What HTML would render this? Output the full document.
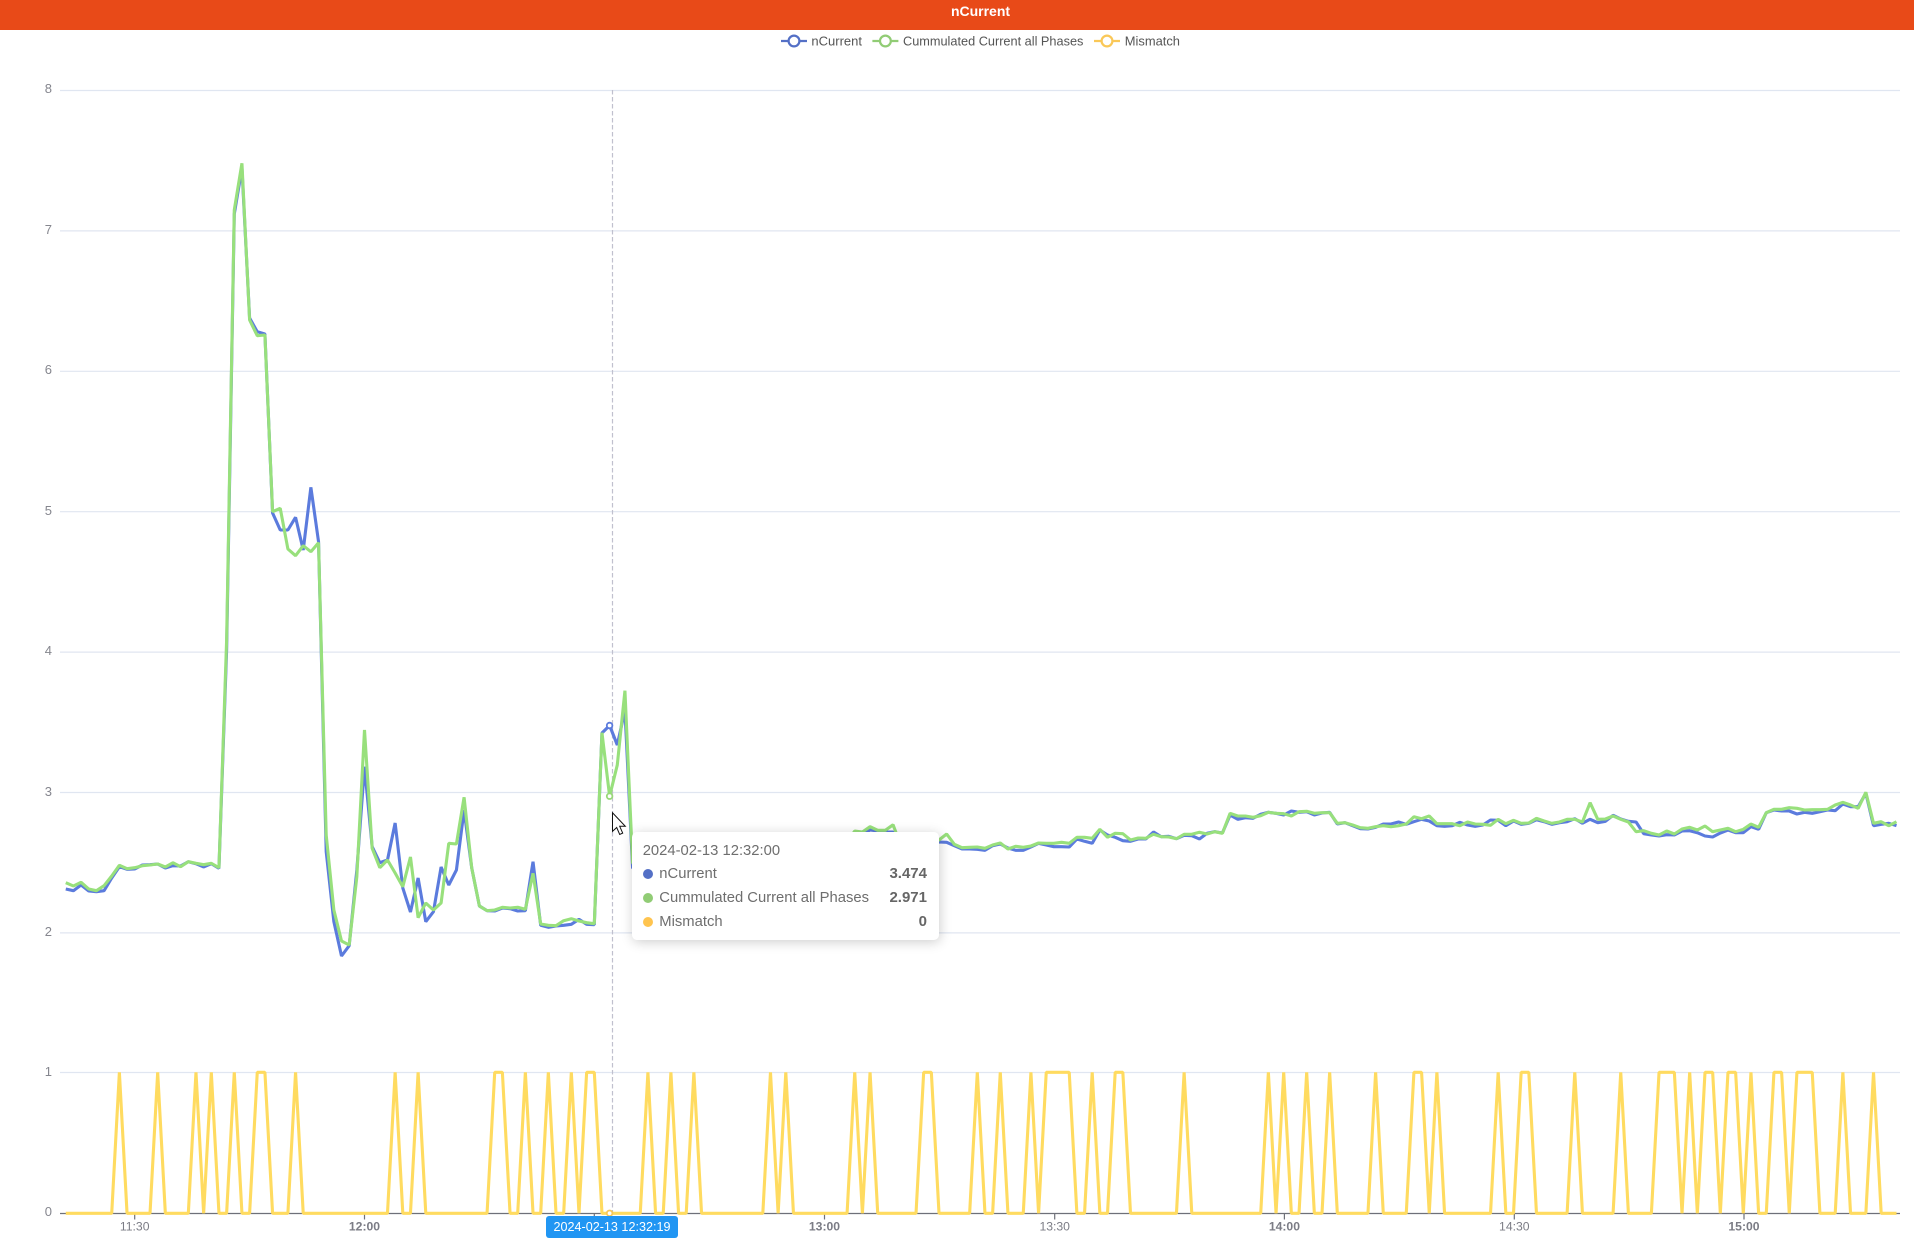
<!DOCTYPE html>
<html lang="en">
<head>
<meta charset="utf-8">
<title>nCurrent</title>
<style>
html,body{margin:0;padding:0;background:#fff;}
body{width:1914px;height:1242px;position:relative;overflow:hidden;font-family:"Liberation Sans",sans-serif;}
#bar{position:absolute;left:0;top:0;width:1914px;height:30px;background:#e84a18;color:#fff;font-weight:bold;font-size:14px;line-height:23px;text-align:center;padding-left:47px;box-sizing:border-box;}
svg{position:absolute;left:0;top:0;}
#tip{position:absolute;left:632px;top:832px;width:307px;height:108px;background:#fff;border-radius:5px;box-shadow:1px 2px 12px rgba(0,0,0,.2);color:#6e6e6e;font-size:14.8px;}
#tip div{position:absolute;white-space:nowrap;line-height:20px;}
#tip .dot{width:10px;height:10px;border-radius:50%;left:11px;}
#tip .v{right:12px;font-weight:bold;font-size:15px;color:#666;}
#plabel{position:absolute;left:546px;top:1216px;width:132px;height:22px;background:#2196f3;border-radius:3px;color:#fff;font-size:12.6px;line-height:22px;text-align:center;}
</style>
</head>
<body>
<svg width="1914" height="1242" viewBox="0 0 1914 1242">
<g stroke="#e0e6f1" stroke-width="1.2">
<path d="M60 90.5H1900M60 230.9H1900M60 371.3H1900M60 511.7H1900M60 652.1H1900M60 792.5H1900M60 932.9H1900M60 1072.5H1900"/>
</g>
<path d="M60 1213.5H1900" stroke="#6e7079" stroke-width="1.2"/>
<path d="M134.7 1213.5v6M364.5 1213.5v6M594.3 1213.5v6M824.5 1213.5v6M1054.7 1213.5v6M1284.4 1213.5v6M1514.3 1213.5v6M1744 1213.5v6" stroke="#6e7079" stroke-width="1.2"/>
<g font-family="Liberation Sans, sans-serif" font-size="13" fill="#85868e" text-anchor="end">
<text x="52" y="93">8</text><text x="52" y="234">7</text><text x="52" y="374">6</text><text x="52" y="515">5</text><text x="52" y="655">4</text><text x="52" y="796">3</text><text x="52" y="936">2</text><text x="52" y="1076">1</text><text x="52" y="1216">0</text>
</g>
<g font-family="Liberation Sans, sans-serif" font-size="12.2" fill="#7b7c85" text-anchor="middle">
<text x="134.7" y="1230.5">11:30</text>
<text x="364.5" y="1230.5" font-weight="bold">12:00</text>
<text x="824.5" y="1230.5" font-weight="bold">13:00</text>
<text x="1054.7" y="1230.5">13:30</text>
<text x="1284.4" y="1230.5" font-weight="bold">14:00</text>
<text x="1514.3" y="1230.5">14:30</text>
<text x="1744" y="1230.5" font-weight="bold">15:00</text>
</g>
<path d="M612.5 90V1213" stroke="#c0c0ce" stroke-width="1.2" stroke-dasharray="4.5 2.5" fill="none"/>
<g transform="translate(134.7 0) scale(7.66 1)" fill="none" stroke-width="3.1" stroke-linejoin="bevel">
<polyline vector-effect="non-scaling-stroke" stroke="#5b7bdd" points="-9,889 -8,890.7 -7,885 -6,891 -5,891.7 -4,890.7 -3,878 -2,866.7 -1,869.3 0,869 1,865 2,864.7 3,864 4,868 5,865.7 6,866 7,861.7 8,863.7 9,867 10,863.7 11,868.3 12,650 13,214 14,168 15,318 16,331.7 17,334 18,513 19,530 20,530 21,517.3 22,550 23,487.3 24,541.7 25,851.7 26,921.7 27,956 28,945.7 29,870 30,766.7 31,846.7 32,862.7 33,860 34,823 35,888 36,912 37,878 38,921.7 39,911.7 40,867 41,885 42,870 43,810 44,868 45,906 46,910.7 47,911 48,908 49,908.7 50,911 51,910.7 52,861.7 53,925.3 54,927.3 55,926 56,925.3 57,924.3 58,919.3 59,924.3 60,924.7 61,733 62,725.5 63,745 64,710 65,868 66,870 70,868 75,866 80,860 85,855 90,850 93,845 94,833 95,834 96,830 97,831 98,832 99,832 100,845 101,845 104,843 105,842 106,842.3 107,845.7 108,849 109,849 110,849.3 111,850.3 112,845.7 113,844 114,848 115,850.3 116,850.3 117,847 118,843.3 119,845 120,846.7 121,846.7 122,847 123,839 124,841.3 125,843.3 126,830 127,835 128,837.3 129,840.7 130,841.3 131,839 132,839 133,832 134,836.7 135,836.3 136,838.7 137,835.3 138,835.7 139,839 140,833.3 141,831.7 142,833 143,815 144,819.3 145,817.7 146,818.3 147,814.3 148,812.3 149,813.3 150,815 151,811 152,812.3 153,811.7 154,815 155,813 156,812.3 157,824 158,822.7 159,825.7 160,828.7 161,829 162,827.3 163,824 164,824 165,822 166,824.3 167,821.7 168,819.3 169,821 170,825.7 171,826.3 172,825.7 173,822.3 174,825 175,826.3 176,825 177,820 178,820.3 179,825.7 180,821 181,824.3 182,823.3 183,819.7 184,821.7 185,824.3 186,822.7 187,821.7 188,818.7 189,823.3 190,819.3 191,822.7 192,821.3 193,815.3 194,819 195,821.3 196,822 197,833.7 198,835 199,836 200,834.7 201,835 202,831 203,830.7 204,832.7 205,836 206,837 207,833 208,830 209,832.7 210,832.7 211,826.7 212,829.3 213,812.7 214,810 215,811 216,811 217,814 218,812.3 219,813.3 220,811.7 221,810 222,810.7 223,804 224,806.7 225,806.7 226,793.3 227,825.7 228,824.3 229,823.3 230,825.7"/>
<polyline vector-effect="non-scaling-stroke" stroke="#98e07c" points="-9,882.7 -8,886 -7,882.3 -6,889 -5,890.7 -4,885.7 -3,876 -2,865.3 -1,868.7 0,867.7 1,865.7 2,865 3,864 4,867 5,862.7 6,866.7 7,861.7 8,863.3 9,864.7 10,863.3 11,867.7 12,640 13,210 14,163.3 15,320 16,335.7 17,335 18,511.7 19,508.3 20,549 21,555.7 22,545.7 23,551.7 24,542.7 25,835 26,910 27,941 28,945 29,876.7 30,730 31,848.3 32,867.7 33,860 34,873 35,886.7 36,857 37,917.7 38,903 39,910 40,903 41,843.3 42,844 43,797.3 44,868 45,906 46,910.7 47,910 48,907.3 49,908 50,907.3 51,909.3 52,873.3 53,924 54,925.3 55,925.7 56,920.7 57,918.7 58,921 59,922.7 60,923.7 61,732.7 62,796.2 63,765 64,690.7 65,863 66,868 70,866 75,864 80,860 85,855 90,850 93,842 94,831 95,832 96,826.7 97,830.3 98,830.3 99,824.7 100,845 101,846 104,842 105,840 106,834 107,844.3 108,847.7 109,847.3 110,847 111,848.3 112,845 113,843 114,849 115,846.3 116,847.3 117,846 118,843 119,843.3 120,843.3 121,842.3 122,843.3 123,837.3 124,837.3 125,838.3 126,829.3 127,837.3 128,833.3 129,833.7 130,840 131,838 132,838.3 133,834.3 134,836.7 135,837 136,838.7 137,834.3 138,834.3 139,832.3 140,834 141,831.7 142,833.3 143,813.3 144,816 145,816 146,817.3 147,815.7 148,812.3 149,813.3 150,813.7 151,816 152,811.7 153,811.3 154,813.3 155,812.7 156,812.7 157,823.3 158,822.7 159,825 160,827.7 161,828.3 162,826.7 163,825.7 164,826.7 165,825.7 166,824 167,816.7 168,818.7 169,816 170,823.7 171,823.7 172,823.7 173,825.7 174,822 175,824 176,824.3 177,825.3 178,819.3 179,823.7 180,820.3 181,823.3 182,823 183,818.3 184,821 185,823.3 186,822 187,819.3 188,819.3 189,822 190,802.7 191,819.3 192,819 193,816 194,819.3 195,822 196,831.7 197,830.7 198,833.3 199,835 200,831 201,834 202,829 203,827.3 204,830 205,826 206,831.7 207,830 208,828.3 209,831.7 210,829.3 211,824 212,827.3 213,812.7 214,809.3 215,809.3 216,807.7 217,808.3 218,810 219,809.7 220,809.7 221,809.3 222,805 223,802.3 224,805 225,808.3 226,792.3 227,823.3 228,821.7 229,825.7 230,821.7"/>
<polyline vector-effect="non-scaling-stroke" stroke="#ffdb60" points="-9,1213.3 -3,1213.3 -2,1072.3 -1,1213.3 2,1213.3 3,1072.3 4,1213.3 7,1213.3 8,1072.3 9,1213.3 10,1072.3 11,1213.3 12,1213.3 13,1072.3 14,1213.3 15,1213.3 16,1072.3 17,1072.3 18,1213.3 20,1213.3 21,1072.3 22,1213.3 33,1213.3 34,1072.3 35,1213.3 36,1213.3 37,1072.3 38,1213.3 46,1213.3 47,1072.3 48,1072.3 49,1213.3 50,1213.3 51,1072.3 52,1213.3 53,1213.3 54,1072.3 55,1213.3 56,1213.3 57,1072.3 58,1213.3 59,1072.3 60,1072.3 61,1213.3 66,1213.3 67,1072.3 68,1213.3 69,1213.3 70,1072.3 71,1213.3 72,1213.3 73,1072.3 74,1213.3 82,1213.3 83,1072.3 84,1213.3 85,1072.3 86,1213.3 93,1213.3 94,1072.3 95,1213.3 96,1072.3 97,1213.3 102,1213.3 103,1072.3 104,1072.3 105,1213.3 109,1213.3 110,1072.3 111,1213.3 112,1213.3 113,1072.3 114,1213.3 116,1213.3 117,1072.3 118,1213.3 119,1072.3 122,1072.3 123,1213.3 124,1213.3 125,1072.3 126,1213.3 127,1213.3 128,1072.3 129,1072.3 130,1213.3 136,1213.3 137,1072.3 138,1213.3 147,1213.3 148,1072.3 149,1213.3 150,1072.3 151,1213.3 152,1213.3 153,1072.3 154,1213.3 155,1213.3 156,1072.3 157,1213.3 161,1213.3 162,1072.3 163,1213.3 166,1213.3 167,1072.3 168,1072.3 169,1213.3 170,1072.3 171,1213.3 177,1213.3 178,1072.3 179,1213.3 180,1213.3 181,1072.3 182,1072.3 183,1213.3 187,1213.3 188,1072.3 189,1213.3 193,1213.3 194,1072.3 195,1213.3 198,1213.3 199,1072.3 201,1072.3 202,1213.3 203,1072.3 204,1213.3 205,1072.3 206,1072.3 207,1213.3 208,1072.3 209,1072.3 210,1213.3 211,1072.3 212,1213.3 213,1213.3 214,1072.3 215,1072.3 216,1213.3 217,1072.3 219,1072.3 220,1213.3 222,1213.3 223,1072.3 224,1213.3 226,1213.3 227,1072.3 228,1213.3 230,1213.3"/>
</g>
<circle cx="609.6" cy="725.5" r="2.8" fill="#fff" stroke="#5b7bdd" stroke-width="1.8"/>
<circle cx="609.6" cy="796.2" r="2.8" fill="#fff" stroke="#98d87a" stroke-width="1.8"/>
<circle cx="609.6" cy="1213.3" r="2.8" fill="#fff" stroke="#fac858" stroke-width="1.8"/>
<path d="M612.5 812.8v18.6l4.2-3.9 3 7 3-1.4-3-6.8h5.6z" fill="#fff" stroke="#111" stroke-width="1"/>
<g fill="none" stroke-width="2.2">
<path d="M781 41h26" stroke="#5470c6"/><circle cx="794" cy="41" r="5.4" fill="#fff" stroke="#5470c6"/>
<path d="M872.4 41h26" stroke="#91cc75"/><circle cx="885.4" cy="41" r="5.4" fill="#fff" stroke="#91cc75"/>
<path d="M1094 41h26" stroke="#fac858"/><circle cx="1107" cy="41" r="5.4" fill="#fff" stroke="#fac858"/>
</g>
<g font-family="Liberation Sans, sans-serif" font-size="12.6" fill="#555">
<text x="811.4" y="45.3" textLength="50.6" lengthAdjust="spacingAndGlyphs">nCurrent</text>
<text x="903" y="45.3" textLength="180.4" lengthAdjust="spacingAndGlyphs">Cummulated Current all Phases</text>
<text x="1124.8" y="45.3" textLength="55.2" lengthAdjust="spacingAndGlyphs">Mismatch</text>
</g>
</svg>
<div id="bar">nCurrent</div>
<div id="tip">
<div style="left:10.7px;top:9px;">2024-02-13 12:32:00</div>
<div class="dot" style="top:36.5px;background:#5470c6;"></div>
<div style="left:27.3px;top:32.3px;">nCurrent</div>
<div class="v" style="top:32.3px;">3.474</div>
<div class="dot" style="top:60.5px;background:#91cc75;"></div>
<div style="left:27.3px;top:56.3px;">Cummulated Current all Phases</div>
<div class="v" style="top:56.3px;">2.971</div>
<div class="dot" style="top:84.5px;background:#ffc44f;"></div>
<div style="left:27.3px;top:80.3px;">Mismatch</div>
<div class="v" style="top:80.3px;">0</div>
</div>
<div id="plabel">2024-02-13 12:32:19</div>
</body>
</html>
